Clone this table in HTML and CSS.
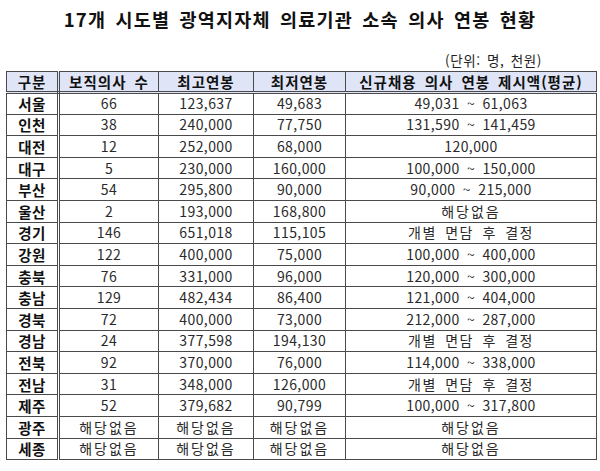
FILE: index.html
```html
<!DOCTYPE html>
<html lang="ko">
<head>
<meta charset="utf-8">
<link rel="stylesheet" href="styles.css">
</head>
<body>
<div class="page">
  <h1 class="title">17개 시도별 광역지자체 의료기관 소속 의사 연봉 현황</h1>
  <div class="unit">(단위: 명, 천원)</div>
  <table class="grid">
    <colgroup>
      <col class="c1"><col class="c2"><col class="c3"><col class="c4"><col class="c5">
    </colgroup>
    <thead>
      <tr><th>구분</th><th>보직의사 수</th><th>최고연봉</th><th>최저연봉</th><th>신규채용 의사 연봉 제시액(평균)</th></tr>
    </thead>
    <tbody>
      <tr><th>서울</th><td>66</td><td>123,637</td><td>49,683</td><td>49,031 ~ 61,063</td></tr>
      <tr><th>인천</th><td>38</td><td>240,000</td><td>77,750</td><td>131,590 ~ 141,459</td></tr>
      <tr><th>대전</th><td>12</td><td>252,000</td><td>68,000</td><td>120,000</td></tr>
      <tr><th>대구</th><td>5</td><td>230,000</td><td>160,000</td><td>100,000 ~ 150,000</td></tr>
      <tr><th>부산</th><td>54</td><td>295,800</td><td>90,000</td><td>90,000 ~ 215,000</td></tr>
      <tr><th>울산</th><td>2</td><td>193,000</td><td>168,800</td><td class="na">해당없음</td></tr>
      <tr><th>경기</th><td>146</td><td>651,018</td><td>115,105</td><td class="sp">개별 면담 후 결정</td></tr>
      <tr><th>강원</th><td>122</td><td>400,000</td><td>75,000</td><td>100,000 ~ 400,000</td></tr>
      <tr><th>충북</th><td>76</td><td>331,000</td><td>96,000</td><td>120,000 ~ 300,000</td></tr>
      <tr><th>충남</th><td>129</td><td>482,434</td><td>86,400</td><td>121,000 ~ 404,000</td></tr>
      <tr><th>경북</th><td>72</td><td>400,000</td><td>73,000</td><td>212,000 ~ 287,000</td></tr>
      <tr><th>경남</th><td>24</td><td>377,598</td><td>194,130</td><td class="sp">개별 면담 후 결정</td></tr>
      <tr><th>전북</th><td>92</td><td>370,000</td><td>76,000</td><td>114,000 ~ 338,000</td></tr>
      <tr><th>전남</th><td>31</td><td>348,000</td><td>126,000</td><td class="sp">개별 면담 후 결정</td></tr>
      <tr><th>제주</th><td>52</td><td>379,682</td><td>90,799</td><td>100,000 ~ 317,800</td></tr>
      <tr><th>광주</th><td class="na">해당없음</td><td class="na">해당없음</td><td class="na">해당없음</td><td class="na">해당없음</td></tr>
      <tr><th>세종</th><td class="na">해당없음</td><td class="na">해당없음</td><td class="na">해당없음</td><td class="na">해당없음</td></tr>
    </tbody>
  </table>
</div>
</body>
</html>
```

FILE: styles.css
```css
html, body {
  margin: 0;
  padding: 0;
  background: #ffffff;
}
.page {
  width: 600px;
  font-family: "Noto Sans CJK KR", "Noto Sans", sans-serif;
  color: #111;
}
.title {
  margin: 0;
  padding-top: 8px;
  height: 30px;
  font-size: 18.5px;
  font-weight: 700;
  text-align: center;
  line-height: 22px;
  letter-spacing: 1.2px;
  word-spacing: 3px;
}
.unit {
  margin-top: 13px;
  height: 20px;
  font-size: 13.5px;
  line-height: 18px;
  text-align: right;
  padding-right: 58px;
  color: #222;
  letter-spacing: 0.6px;
  word-spacing: 2px;
}
.grid {
  margin-left: 6px;
  width: 590px;
  table-layout: fixed;
  border-collapse: collapse;
  font-size: 14px;
}
.c1 { width: 52px; }
.c2 { width: 100px; }
.c3 { width: 95px; }
.c4 { width: 92px; }
.c5 { width: 251px; }
.grid th, .grid td {
  border: 1px solid #4a4a4a;
  padding: 0;
  text-align: center;
  line-height: 17px;
  white-space: nowrap;
}
.grid thead th {
  background: #dfe5f6;
  height: 19px;
  font-weight: 700;
  font-size: 14.5px;
  color: #111;
  border-bottom: 3px double #4a4a4a;
  letter-spacing: 1px;
  word-spacing: 3px;
}
.grid thead th:first-child,
.grid tbody th {
  border-right: 3px double #4a4a4a;
}
.grid tbody tr {
  height: 21.6px;
}
.grid tbody th {
  font-weight: 700;
  font-size: 14.5px;
  color: #111;
  letter-spacing: 0.5px;
}
.grid tbody td {
  color: #2a2a2a;
  letter-spacing: 0.4px;
  word-spacing: 3px;
}
.grid td.sp {
  letter-spacing: 1.5px;
  word-spacing: 3px;
}
.grid td.na {
  letter-spacing: 2px;
}
```
